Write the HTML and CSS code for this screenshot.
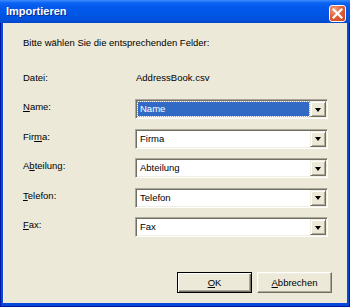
FILE: index.html
```html
<!DOCTYPE html>
<html>
<head>
<meta charset="utf-8">
<link rel="stylesheet" href="styles.css">
</head>
<body>
<div class="window">
  <div class="titlebar">
    <span class="title">Importieren</span>
    <span class="close">
      <svg width="11" height="11" viewBox="0 0 11 11"><path d="M1.5 1.5 L9.5 9.5 M9.5 1.5 L1.5 9.5" stroke="#fff" stroke-width="2.2" stroke-linecap="square"/></svg>
    </span>
  </div>
  <div class="client">
    <div class="intro">Bitte wählen Sie die entsprechenden Felder:</div>
    <div class="file-row">
      <span class="label">Datei:</span>
      <span class="value">AddressBook.csv</span>
    </div>
    <div class="fields">
      <div class="row">
        <span class="label"><u>N</u>ame:</span>
        <div class="combo"><span class="combo-text selected">Name</span><span class="drop"><i class="arrow"></i></span></div>
      </div>
      <div class="row">
        <span class="label">Fir<u>m</u>a:</span>
        <div class="combo"><span class="combo-text">Firma</span><span class="drop"><i class="arrow"></i></span></div>
      </div>
      <div class="row">
        <span class="label">A<u>b</u>teilung:</span>
        <div class="combo"><span class="combo-text">Abteilung</span><span class="drop"><i class="arrow"></i></span></div>
      </div>
      <div class="row">
        <span class="label"><u>T</u>elefon:</span>
        <div class="combo"><span class="combo-text">Telefon</span><span class="drop"><i class="arrow"></i></span></div>
      </div>
      <div class="row">
        <span class="label"><u>F</u>ax:</span>
        <div class="combo"><span class="combo-text">Fax</span><span class="drop"><i class="arrow"></i></span></div>
      </div>
    </div>
    <div class="buttons">
      <div class="btn default"><span><u>O</u>K</span></div>
      <div class="btn"><span><u>A</u>bbrechen</span></div>
    </div>
  </div>
</div>
</body>
</html>
```
FILE: styles.css
```css
* { box-sizing: border-box; }
html, body { margin: 0; padding: 0; }
body {
  width: 350px;
  height: 307px;
  overflow: hidden;
  font-family: "Liberation Sans", Arial, sans-serif;
  font-size: 9.5px;
  color: #000;
}
.window {
  width: 350px;
  height: 307px;
  display: flex;
  flex-direction: column;
  background: #0748D8;
  border: 1px solid #0019A0;
  border-top: none;
}
.titlebar {
  height: 23px;
  flex: none;
  display: flex;
  align-items: center;
  justify-content: space-between;
  padding: 0 4px 0 6px;
  background: linear-gradient(#3D8BFF 0px, #0A63F2 3px, #0258EA 8px, #0056E6 14px, #0050DB 20px, #0445C8 23px);
  margin: 0 -1px;
}
.title {
  color: #fff;
  font-weight: bold;
  font-size: 11px;
  text-shadow: 1px 1px 0 #0A2E90;
  padding-bottom: 1px;
}
.close {
  width: 17px;
  height: 17px;
  margin-top: 3px;
  border: 1px solid #fff;
  border-radius: 3px;
  background: radial-gradient(circle at 30% 25%, #F0A080 0%, #E2603C 45%, #C9421A 100%);
  display: flex;
  align-items: center;
  justify-content: center;
}
.client {
  flex: 1;
  margin: 0 2px 3px 2px;
  background: #ECE9D8;
  border-left: 1px solid #F5F3EA;
  display: flex;
  flex-direction: column;
  padding: 14px 15px 10px 19px;
}
.intro { line-height: 12px; }
.file-row {
  display: flex;
  margin-top: 23px;
  line-height: 12px;
}
.label {
  width: 112px;
  flex: none;
}
.value { padding-left: 1px; }
.fields {
  display: flex;
  flex-direction: column;
  gap: 9.5px;
  margin-top: 15px;
}
.row {
  display: flex;
  align-items: flex-start;
}
.row .label {
  line-height: 12px;
  padding-top: 2px;
}
.combo {
  width: 193px;
  height: 20px;
  display: flex;
  background: #fff;
  border-style: solid;
  border-width: 1px;
  border-color: #ACA899 #fff #fff #ACA899;
  box-shadow: inset 1px 1px 0 #716F64, inset -1px -1px 0 #F1EFE2;
  padding: 2px 2px 2px 2px;
}
.combo-text {
  flex: 1;
  display: flex;
  align-items: center;
  padding-left: 2px;
  margin-right: 1px;
  line-height: 12px;
}
.combo-text.selected {
  background: #316AC5;
  color: #fff;
  outline: 1px dotted #C8A050;
}
.drop {
  width: 16px;
  flex: none;
  margin: -1px -1px -1px 0;
  background: #ECE9D8;
  border-style: solid;
  border-width: 1px;
  border-color: #F1EFE2 #716F64 #716F64 #F1EFE2;
  box-shadow: inset 1px 1px 0 #fff, inset -1px -1px 0 #ACA899;
  display: flex;
  align-items: center;
  justify-content: center;
}
.arrow {
  width: 0;
  height: 0;
  border-left: 3.5px solid transparent;
  border-right: 3.5px solid transparent;
  border-top: 4px solid #000;
  margin-top: 1px;
}
.buttons {
  margin-top: auto;
  display: flex;
  justify-content: flex-end;
  gap: 5px;
}
.btn {
  width: 75px;
  height: 21px;
  background: #ECE9D8;
  border-style: solid;
  border-width: 1px;
  border-color: #fff #716F64 #716F64 #fff;
  box-shadow: inset -1px -1px 0 #ACA899, inset 1px 1px 0 #F1EFE2;
  display: flex;
  align-items: center;
  justify-content: center;
  line-height: 12px;
}
.btn.default {
  border: 1px solid #000;
  box-shadow: inset 1px 1px 0 #fff, inset -1px -1px 0 #716F64, inset -2px -2px 0 #ACA899;
}
u { text-decoration-thickness: 1px; text-underline-offset: 1px; }
```
